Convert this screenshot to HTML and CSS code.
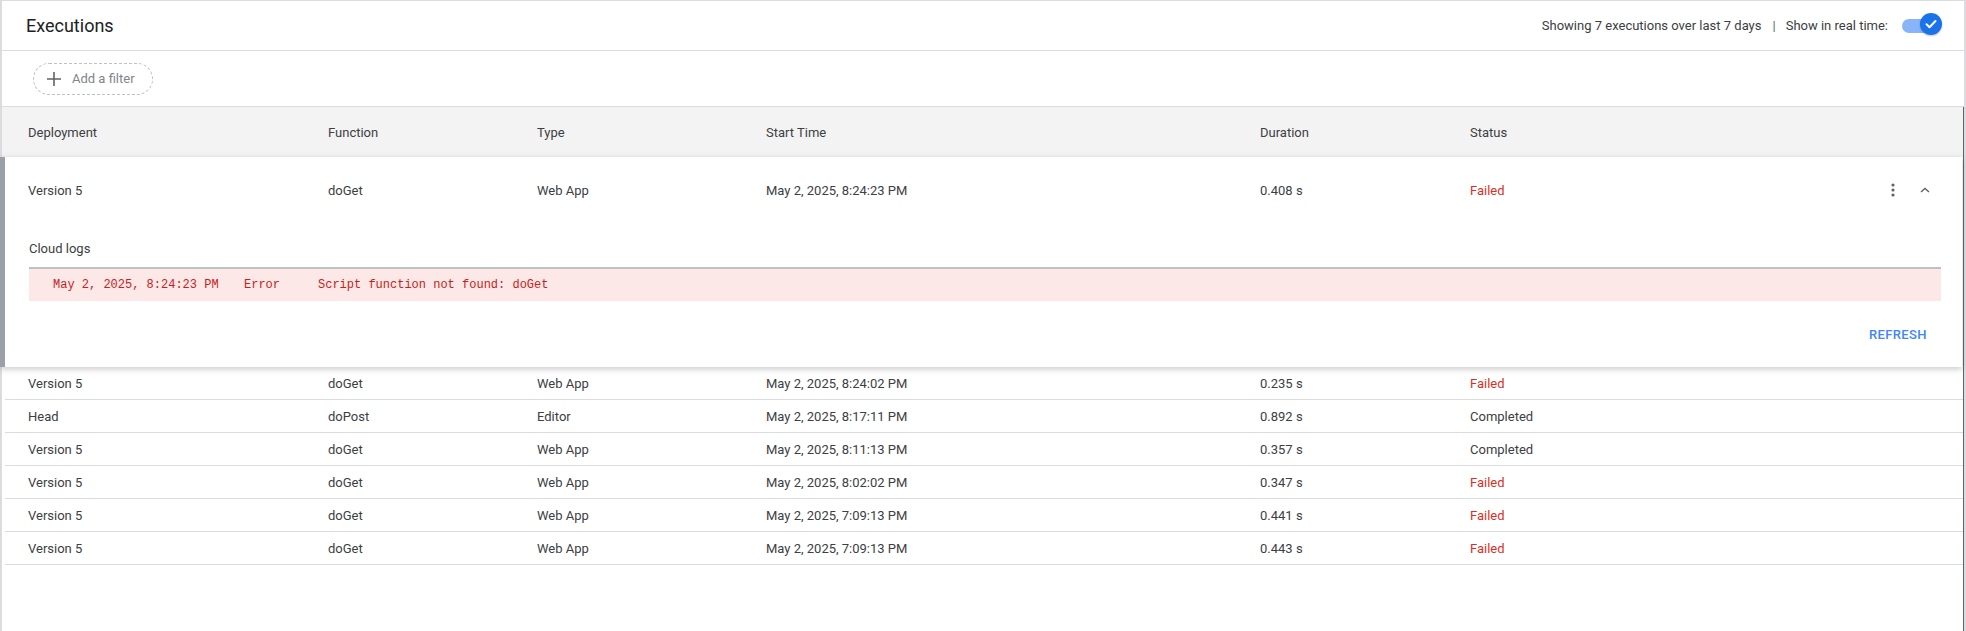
FILE: index.html
```html
<!DOCTYPE html>
<html lang="en">
<head>
<meta charset="utf-8">
<title>Executions</title>
<link rel="stylesheet" href="styles.css">
</head>
<body>
<div class="page">
  <header class="topbar">
    <h1 class="title">Executions</h1>
    <div class="meta">
      <span>Showing 7 executions over last 7 days</span>
      <span class="sep">|</span>
      <span>Show in real time:</span>
      <span class="toggle">
        <span class="track"></span>
        <span class="knob">
          <svg width="14" height="14" viewBox="0 0 14 14"><path d="M2.5 7.3l3 3 6-6.3" fill="none" stroke="#fff" stroke-width="2" stroke-linecap="round" stroke-linejoin="round"/></svg>
        </span>
      </span>
    </div>
  </header>

  <div class="filters">
    <button class="chip">
      <svg width="14" height="14" viewBox="0 0 14 14"><path d="M7 0v14M0 7h14" stroke="#5f6368" stroke-width="1.6"/></svg>
      <span>Add a filter</span>
    </button>
  </div>

  <div class="table">
    <div class="row head">
      <div>Deployment</div><div>Function</div><div>Type</div><div>Start Time</div><div>Duration</div><div>Status</div><div></div>
    </div>

    <div class="card">
      <div class="row main">
        <div>Version 5</div><div>doGet</div><div>Web App</div><div>May 2, 2025, 8:24:23 PM</div><div>0.408 s</div><div class="failed">Failed</div>
        <div class="actions">
          <span class="icon-btn">
            <svg width="4" height="14" viewBox="0 0 4 14"><circle cx="2" cy="2" r="1.6" fill="#5f6368"/><circle cx="2" cy="7" r="1.6" fill="#5f6368"/><circle cx="2" cy="12" r="1.6" fill="#5f6368"/></svg>
          </span>
          <span class="icon-btn">
            <svg width="12" height="8" viewBox="0 0 12 8"><path d="M2 6L6 2.5 10 6" fill="none" stroke="#5f6368" stroke-width="1.4"/></svg>
          </span>
        </div>
      </div>
      <div class="details">
        <div class="logs-title">Cloud logs</div>
        <div class="log">
          <span class="log-time">May 2, 2025, 8:24:23 PM</span>
          <span class="log-level">Error</span>
          <span class="log-msg">Script function not found: doGet</span>
        </div>
        <div class="card-actions">
          <button class="text-btn">REFRESH</button>
        </div>
      </div>
    </div>

    <div class="row">
      <div>Version 5</div><div>doGet</div><div>Web App</div><div>May 2, 2025, 8:24:02 PM</div><div>0.235 s</div><div class="failed">Failed</div><div></div>
    </div>
    <div class="row">
      <div>Head</div><div>doPost</div><div>Editor</div><div>May 2, 2025, 8:17:11 PM</div><div>0.892 s</div><div>Completed</div><div></div>
    </div>
    <div class="row">
      <div>Version 5</div><div>doGet</div><div>Web App</div><div>May 2, 2025, 8:11:13 PM</div><div>0.357 s</div><div>Completed</div><div></div>
    </div>
    <div class="row">
      <div>Version 5</div><div>doGet</div><div>Web App</div><div>May 2, 2025, 8:02:02 PM</div><div>0.347 s</div><div class="failed">Failed</div><div></div>
    </div>
    <div class="row">
      <div>Version 5</div><div>doGet</div><div>Web App</div><div>May 2, 2025, 7:09:13 PM</div><div>0.441 s</div><div class="failed">Failed</div><div></div>
    </div>
    <div class="row">
      <div>Version 5</div><div>doGet</div><div>Web App</div><div>May 2, 2025, 7:09:13 PM</div><div>0.443 s</div><div class="failed">Failed</div><div></div>
    </div>
  </div>
</div>
</body>
</html>
```

FILE: styles.css
```css
* { box-sizing: border-box; }

html, body {
  margin: 0;
  padding: 0;
  background: #fff;
}

body {
  font-family: Roboto, "Noto Sans", Arial, sans-serif;
  font-size: 13px;
  color: #3c4043;
}

.page {
  width: 1966px;
  height: 631px;
  border-top: 1px solid #dadce0;
  border-left: 2px solid #dadce0;
  border-right: 2px solid #dadce0;
  display: flex;
  flex-direction: column;
}

/* Top bar */
.topbar {
  height: 50px;
  flex: none;
  border-bottom: 1px solid #dadce0;
  display: flex;
  align-items: center;
  justify-content: space-between;
  padding: 0 22px 0 24px;
}

.title {
  margin: 0;
  font-size: 18px;
  font-weight: 400;
  color: #202124;
}

.meta {
  display: flex;
  align-items: center;
  color: #3c4043;
  font-size: 13px;
}

.sep {
  margin: 0 10px 0 11px;
  color: #5f6368;
}

.toggle {
  position: relative;
  width: 40px;
  height: 22px;
  margin-left: 14px;
  margin-top: -4px;
}

.track {
  position: absolute;
  left: 0;
  top: 6px;
  width: 32px;
  height: 14px;
  border-radius: 7px;
  background: #8ab4f8;
}

.knob {
  position: absolute;
  right: 0;
  top: 0;
  width: 22px;
  height: 22px;
  border-radius: 50%;
  background: #1a73e8;
  display: flex;
  align-items: center;
  justify-content: center;
  box-shadow: 0 1px 2px rgba(0,0,0,0.25);
}

/* Filters */
.filters {
  height: 56px;
  flex: none;
  border-bottom: 1px solid #dadce0;
  display: flex;
  align-items: center;
  padding-left: 31px;
}

.chip {
  height: 32px;
  width: 120px;
  border: 1px dashed #bdc1c6;
  border-radius: 16px;
  background: #fff;
  display: flex;
  align-items: center;
  gap: 11px;
  padding: 0 0 0 13px;
  font-family: inherit;
  font-size: 13px;
  color: #80868b;
}

/* Table */
.table {
  flex: 1;
  display: flex;
  flex-direction: column;
  border-right: 1px solid #5f6368;
}

.row {
  display: grid;
  grid-template-columns: 300px 209px 229px 494px 210px 1fr 120px;
  align-items: center;
  height: 33px;
  margin-left: 3px;
  padding-left: 23px;
  border-bottom: 1px solid #dadce0;
  flex: none;
}

.row.head {
  height: 50px;
  margin-left: 0;
  padding-left: 26px;
  background: #f3f3f3;
  border-bottom: none;
  color: #3c4043;
}

.failed {
  color: #d93025;
}

/* Expanded card */
.card {
  flex: none;
  margin-left: -2px;
  margin-right: 1px;
  border-left: 5px solid #9aa0a6;
  background: #fff;
  box-shadow: 0 2px 6px rgba(60, 64, 67, 0.28);
  position: relative;
  z-index: 1;
}

.row.main {
  height: 66px;
  margin-left: 0;
  padding-left: 23px;
  border-bottom: none;
}

.actions {
  display: flex;
  justify-content: flex-end;
  align-items: center;
  gap: 8px;
  padding-right: 25px;
}

.icon-btn {
  width: 24px;
  height: 24px;
  display: flex;
  align-items: center;
  justify-content: center;
}

.details {
  padding: 17px 21px 0 24px;
}

.logs-title {
  line-height: 18px;
  color: #3c4043;
  margin-bottom: 9px;
}

.log {
  height: 34px;
  border-top: 2px solid #bdc1c6;
  background: #fce8e6;
  display: flex;
  align-items: center;
  padding-left: 24px;
  font-family: "Liberation Mono", "DejaVu Sans Mono", monospace;
  font-size: 12px;
  color: #c5221f;
}

.log-time { width: 191px; }
.log-level { width: 74px; }

.card-actions {
  height: 66px;
  display: flex;
  align-items: center;
  justify-content: flex-end;
}

.text-btn {
  border: none;
  background: none;
  padding: 8px 14px;
  font-family: inherit;
  font-size: 13px;
  font-weight: 500;
  letter-spacing: 0.4px;
  color: #4285f4;
}
```
